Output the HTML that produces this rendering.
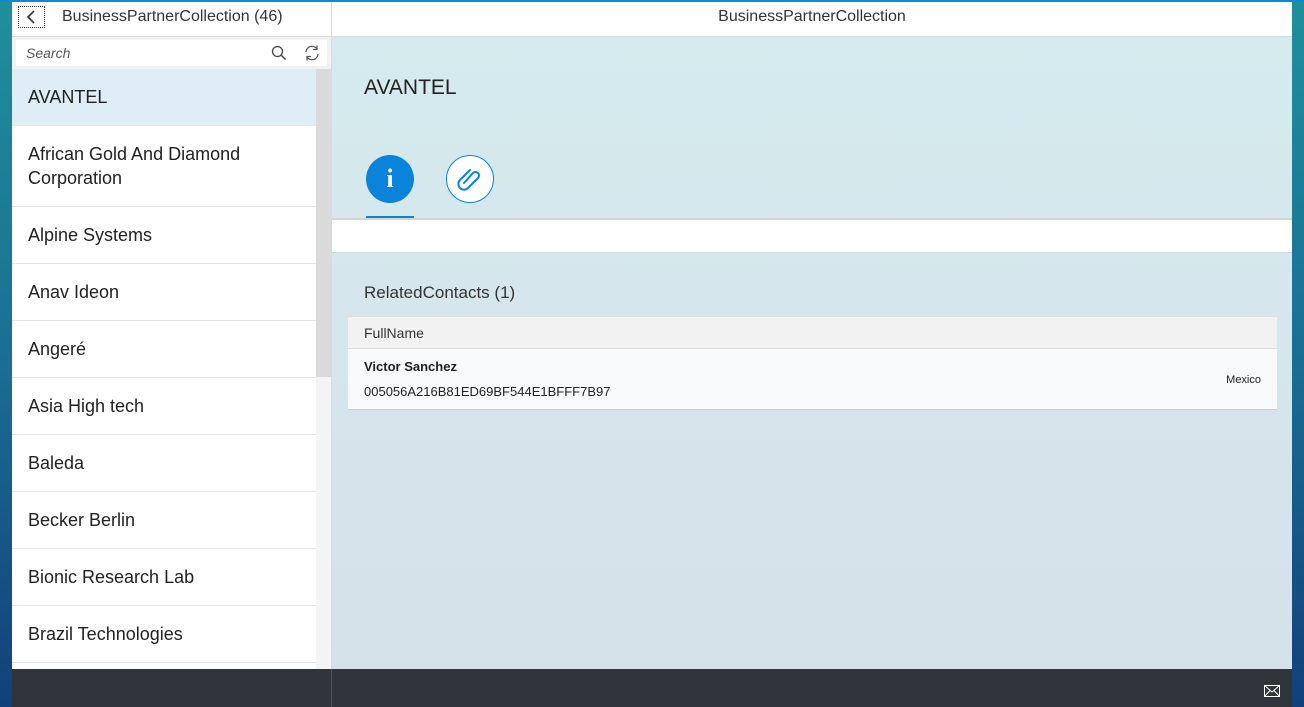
<!DOCTYPE html>
<html><head><meta charset="utf-8"><style>
*{margin:0;padding:0;box-sizing:border-box}
body{width:1304px;height:707px;overflow:hidden;position:relative;font-family:"Liberation Sans",sans-serif;background:linear-gradient(180deg,#1f8f9c 0%,#1a6f94 50%,#12407a 100%)}
.top{position:absolute;left:0;top:0;width:1304px;height:2px;background:#0a8ad6}
.lh{position:absolute;left:12px;top:2px;width:319px;height:35px;background:#fff;border-bottom:1px solid #d9d9d9}
.rh{position:absolute;left:332px;top:2px;width:960px;height:35px;background:#fff;border-bottom:1px solid #d9d9d9;text-align:center;font-size:16px;color:#333;line-height:30px}
.back{position:absolute;left:6px;top:4px;width:27px;height:22px;border:1px dotted #333}
.lt{position:absolute;left:50px;top:6px;font-size:16px;color:#333}
.sb{position:absolute;left:12px;top:37px;width:319px;height:32px;background:#f2f2f2}
.si{position:absolute;left:4px;top:3px;width:311px;height:26px;background:#fff;font-style:italic;font-size:14px;color:#555;padding:5px 10px}
.list{position:absolute;left:12px;top:69px;width:304px;height:600px;background:#fff;overflow:hidden}
.it{border-bottom:1px solid #e5e5e5;height:57px;padding:0 16px;display:flex;align-items:center;font-size:18px;color:#222;line-height:24px}
.scr{position:absolute;left:316px;top:69px;width:15px;height:600px;background:#f4f4f4}
.thumb{position:absolute;left:0;top:0;width:15px;height:308px;background:#dadada}
.sep{position:absolute;left:331px;top:2px;width:1px;height:705px;background:#d9d9d9}
.main{position:absolute;left:332px;top:37px;width:960px;height:632px;background:linear-gradient(180deg,#d5ebee 0%,#d5e1e9 100%)}
.foot{position:absolute;left:12px;top:669px;width:1280px;height:38px;background:#30343b}
.fsep{position:absolute;left:331px;top:669px;width:1px;height:38px;background:#555}
</style></head><body>
<div class="top"></div>
<div class="lh"><div class="back"><svg width="25" height="20"><path d="M15 4 L9 10 L15 16" stroke="#333" stroke-width="1.6" fill="none"/></svg></div><div class="lt">BusinessPartnerCollection (46)</div></div>
<div class="rh">BusinessPartnerCollection</div>
<div class="sb"><div class="si">Search
<svg style="position:absolute;left:255px;top:5px" width="16" height="16"><circle cx="6.5" cy="6.5" r="5" stroke="#444" stroke-width="1.3" fill="none"/><path d="M10 10 L14.5 14.5" stroke="#444" stroke-width="1.5"/></svg>
<svg style="position:absolute;left:287px;top:4px" width="18" height="18"><path d="M3 8 A6 6 0 0 1 14 5 M15 10 A6 6 0 0 1 4 13" stroke="#555" stroke-width="1.3" fill="none"/><path d="M14 1.5 V5.5 H10 M4 16.5 V12.5 H8" stroke="#555" stroke-width="1.3" fill="none"/></svg></div></div>
<div class="list">
<div class="it" style="height:57px;background:#dfedf7">AVANTEL</div>
<div class="it" style="height:81px">African Gold And Diamond Corporation</div>
<div class="it">Alpine Systems</div>
<div class="it">Anav Ideon</div>
<div class="it">Angeré</div>
<div class="it">Asia High tech</div>
<div class="it">Baleda</div>
<div class="it">Becker Berlin</div>
<div class="it">Bionic Research Lab</div>
<div class="it">Brazil Technologies</div>
<div class="it"></div>
</div>
<div class="scr"><div class="thumb"></div></div>
<div class="sep"></div>
<div class="main">
<div style="position:absolute;left:32px;top:39px;font-size:21px;color:#222">AVANTEL</div>
<div style="position:absolute;left:34px;top:118px;width:48px;height:48px;border-radius:50%;background:#0a84db;color:#fff;text-align:center;font:bold 26px 'Liberation Serif',serif;line-height:48px">i</div>
<div style="position:absolute;left:34px;top:179px;width:48px;height:3px;background:#0a84db"></div>
<div style="position:absolute;left:114px;top:118px;width:48px;height:48px;border-radius:50%;background:#fff;border:1px solid #0a84db"><svg width="46" height="46"><path d="M17 27 L26 17 A3.5 3.5 0 0 1 31 22 L21 32 A5.5 5.5 0 0 1 13 24 L23 14" stroke="#0a84db" stroke-width="2" fill="none" stroke-linecap="round"/></svg></div>
<div style="position:absolute;left:0;top:181px;width:960px;height:35px;background:#fff;border-top:2px solid #d4d4d4;border-bottom:1px solid #cfd8dc"></div>
<div style="position:absolute;left:32px;top:246px;font-size:17px;color:#333">RelatedContacts (1)</div>
<div style="position:absolute;left:16px;top:279px;width:929px;height:33px;background:#f2f2f2;border-top:1px solid #ddd;border-bottom:1px solid #ddd;font-size:14px;color:#333;padding:8px 16px">FullName</div>
<div style="position:absolute;left:16px;top:312px;width:929px;height:61px;background:#f7f9fa;border-bottom:1px solid #ccc">
<div style="position:absolute;left:16px;top:10px;font-size:13px;font-weight:bold;color:#222">Victor Sanchez</div>
<div style="position:absolute;left:16px;top:35px;font-size:13px;color:#222">005056A216B81ED69BF544E1BFFF7B97</div>
<div style="position:absolute;right:16px;top:25px;font-size:11px;color:#222">Mexico</div></div>
</div>
<div class="foot"><svg style="position:absolute;left:1252px;top:16px" width="16" height="12"><rect x="0.5" y="0.5" width="15" height="11" fill="none" stroke="#fff"/><path d="M0.5 0.5 L8 7 L15.5 0.5 M0.5 11.5 L6 5.5 M15.5 11.5 L10 5.5" stroke="#fff" fill="none"/></svg></div>
<div class="fsep"></div>
</body></html>
